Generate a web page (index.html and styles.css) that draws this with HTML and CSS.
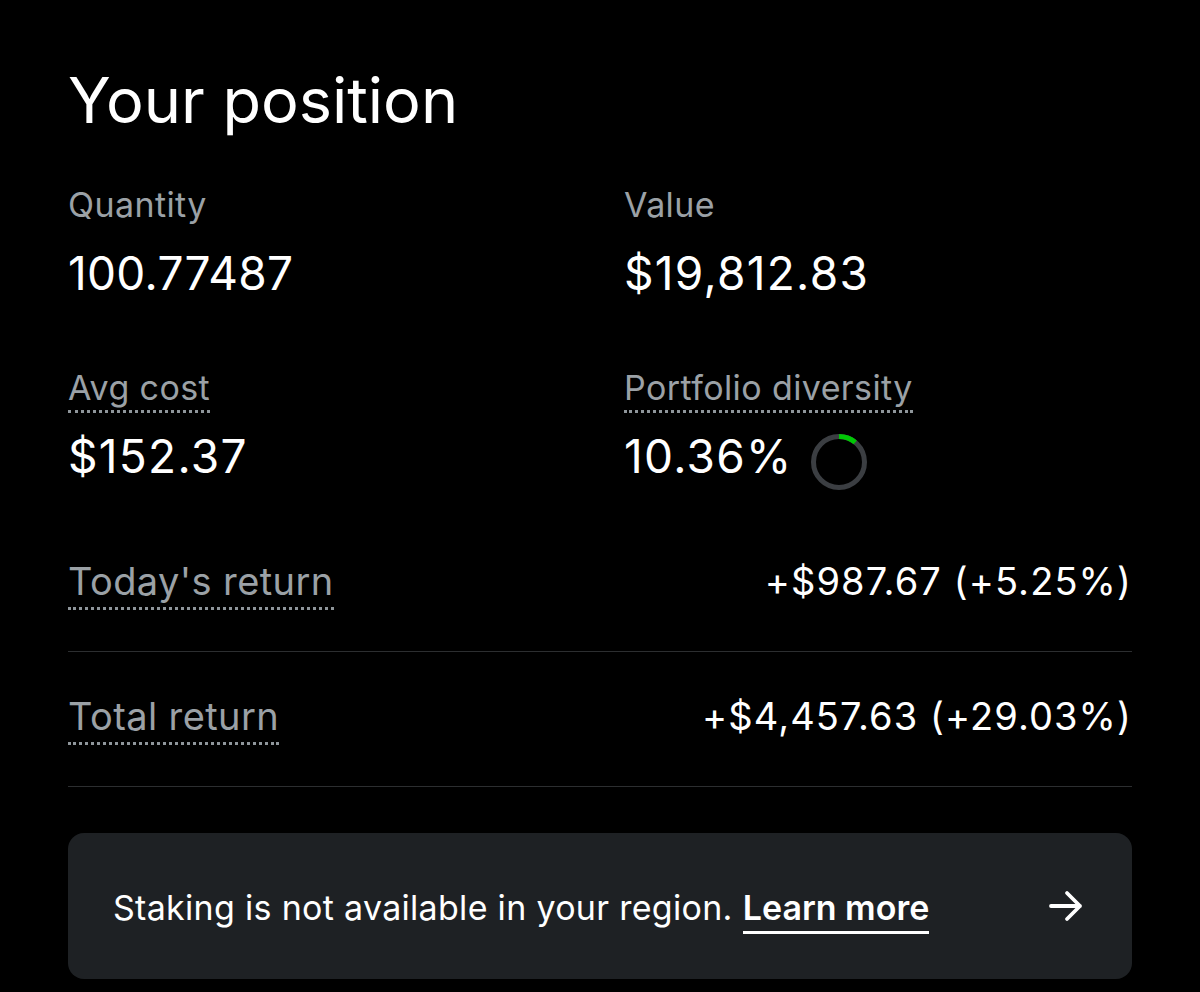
FILE: index.html
```html
<!DOCTYPE html>
<html>
<head>
<meta charset="utf-8">
<link rel="stylesheet" href="styles.css">
</head>
<body>
<main class="page">
  <h1 class="title">Your position</h1>
  <div class="stats">
    <div class="stat">
      <div class="label">Quantity</div>
      <div class="value value-tight">100.77487</div>
    </div>
    <div class="stat">
      <div class="label">Value</div>
      <div class="value">$19,812.83</div>
    </div>
    <div class="stat">
      <div class="label"><span class="dotted">Avg cost</span></div>
      <div class="value">$152.37</div>
    </div>
    <div class="stat">
      <div class="label"><span class="dotted">Portfolio diversity</span></div>
      <div class="value value-ring">10.36%
        <svg class="ring" width="58" height="58" viewBox="0 0 58 58">
          <circle cx="29" cy="29" r="25.5" fill="none" stroke="#3b3e42" stroke-width="5"/>
          <circle cx="29" cy="29" r="25.5" fill="none" stroke="#00c805" stroke-width="5" stroke-dasharray="17.5 200" transform="rotate(-90 29 29)"/>
        </svg>
      </div>
    </div>
  </div>
  <div class="returns">
    <div class="return-row">
      <span class="row-label dotted">Today's return</span>
      <span class="row-value">+$987.67 (+5.25%)</span>
    </div>
    <div class="return-row">
      <span class="row-label dotted">Total return</span>
      <span class="row-value">+$4,457.63 (+29.03%)</span>
    </div>
  </div>
  <div class="banner">
    <p class="banner-text">Staking is not available in your region.<a class="learn">Learn more</a></p>
    <svg class="arrow" width="36" height="32" viewBox="0 0 36 32">
      <path d="M3 16 H32 M19 3 L32 16 L19 29" fill="none" stroke="#fff" stroke-width="3.8" stroke-linecap="round" stroke-linejoin="round"/>
    </svg>
  </div>
</main>
</body>
</html>
```
FILE: styles.css
```css
html, body {
  margin: 0;
  padding: 0;
  background: #000;
}
body {
  font-family: Inter, "Noto Sans", sans-serif;
  color: #fff;
}
.page {
  padding: 64px 68px 0 68px;
}
.title {
  margin: 0;
  font-size: 63px;
  font-weight: 400;
  line-height: 72px;
  letter-spacing: 0;
}
.stats {
  display: grid;
  grid-template-columns: 556px 1fr;
  row-gap: 67px;
  margin-top: 47px;
}
.label {
  font-size: 34px;
  color: #9ba1a6;
  line-height: 44px;
  height: 44px;
  letter-spacing: 0.4px;
}
.dotted {
  padding-bottom: 2px;
  border-bottom: 3px dotted #8f969b;
}
.value {
  margin-top: 20px;
  font-size: 46px;
  line-height: 52px;
  height: 52px;
  letter-spacing: 1.3px;
}
.value-tight {
  letter-spacing: 0.3px;
}
.value-ring {
  display: flex;
  align-items: center;
  gap: 17px;
}
.ring {
  display: block;
  margin-top: 12px;
}
.returns {
  margin-top: 35px;
}
.return-row {
  display: flex;
  justify-content: space-between;
  align-items: center;
  height: 134px;
  border-bottom: 1px solid #2c2e30;
}
.row-label,
.row-value {
  font-size: 38px;
  line-height: 46px;
  padding-bottom: 3px;
}
.row-label {
  color: #9ba1a6;
  letter-spacing: 0.4px;
}
.row-value {
  border-bottom: 3px solid transparent;
  letter-spacing: 1.1px;
}
.banner {
  margin-top: 46px;
  background: #1e2124;
  border-radius: 16px;
  height: 146px;
  display: flex;
  align-items: center;
  justify-content: space-between;
  padding: 0 48px 0 45px;
}
.banner-text {
  margin: 0;
  font-size: 34px;
  margin-top: 2px;
  letter-spacing: 0.3px;
}
.learn {
  font-weight: 600;
  margin-left: 10px;
  padding-bottom: 3px;
  border-bottom: 3px solid #fff;
  letter-spacing: 0;
}
.arrow {
  display: block;
}
```
